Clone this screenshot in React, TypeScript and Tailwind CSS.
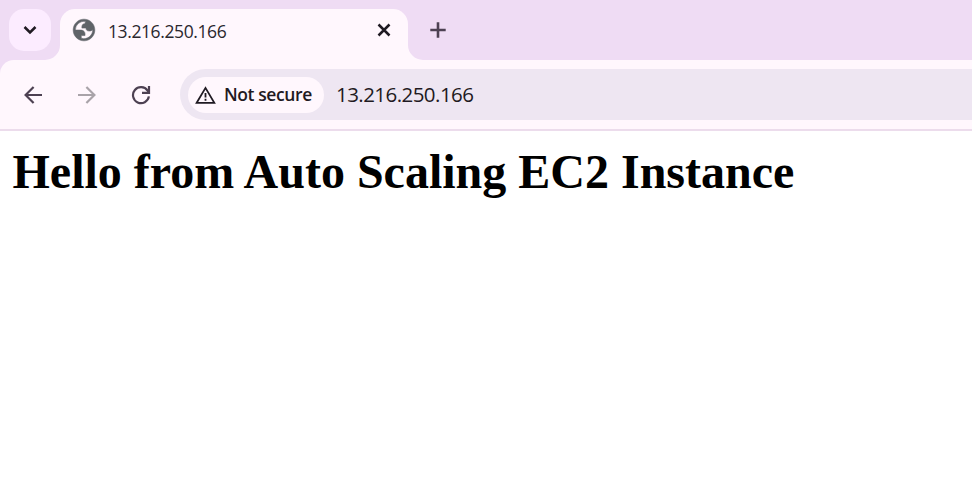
const UI_FONT = "font-['Open_Sans','Noto_Sans',sans-serif]";

function Globe() {
  return (
    <svg width="26" height="26" viewBox="0 0 24 24" className="-ml-px shrink-0" fill="#5f6368" stroke="#5f6368" strokeWidth="0.5">
      <path
        fillRule="evenodd"
        d="M12 2C6.48 2 2 6.48 2 12s4.48 10 10 10 10-4.48 10-10S17.52 2 12 2zM4 12h4.4c3.407.022 4.922 1.73 4.543 5.127H9.488v2.47a8.004 8.004 0 0 0 10.498-8.08C19.327 12.503 18.332 13 17 13c-2.137 0-3.206-.916-3.206-2.75h-3.748c-.274-2.728.683-4.092 2.87-4.092 0-.975.327-1.597.811-1.97A8.004 8.004 0 0 0 4 12z"
      />
    </svg>
  );
}

function Arrow({ className }: { className: string }) {
  return (
    <svg width="18" height="18" viewBox="0 0 18 18" fill="none" stroke="currentColor" strokeWidth="2.2" className={className}>
      <path d="M18 9H2M9.6 1 1.6 9l8 8" />
    </svg>
  );
}

function Reload() {
  return (
    <svg width="20" height="20" viewBox="0 0 20 20" fill="none" stroke="#4d4152" strokeWidth="2.2" className="ml-[35px]">
      <path d="M17.9 11.4A8 8 0 1 1 16.6 5.6L17.6 7" />
      <path d="M18 1v6.9h-7" />
    </svg>
  );
}

function TabStrip() {
  return (
    <div className="flex h-[60px] bg-[#efdcf4] pl-[9px] pt-[9px]">
      <button className="flex size-[42px] items-center justify-center rounded-[15px] bg-[#fcecff]">
        <svg width="14" height="10" viewBox="0 0 14 10" fill="none" stroke="#1f1a22" strokeWidth="2.5">
          <path d="M1.5 2 7 7.5 12.5 2" />
        </svg>
      </button>
      <div className="-ml-1.5 flex h-[51px] items-end">
        <svg width="15" height="15" viewBox="0 0 15 15" fill="#fff7fd">
          <path d="M15 0v15H0A15 15 0 0 0 15 0z" />
        </svg>
        <div className={`flex h-[51px] w-[348px] items-start rounded-t-[15px] bg-[#fff7fd] pl-3 pr-4 ${UI_FONT}`}>
          <div className="flex h-[42px] w-full items-center">
            <Globe />
            <span className="ml-[11px] pt-px text-[17.5px] leading-6 tracking-[-0.4px] text-[#2b272e]">13.216.250.166</span>
            <svg className="ml-auto" width="16" height="16" viewBox="0 0 16 16" fill="none" stroke="#1f1a22" strokeWidth="2.5">
              <path d="m2.5 2.5 11 11m0-11-11 11" />
            </svg>
          </div>
        </div>
        <svg width="15" height="15" viewBox="0 0 15 15" fill="#fff7fd">
          <path d="M0 0v15h15A15 15 0 0 1 0 0z" />
        </svg>
      </div>
      <svg className="ml-[7px] mt-[13px]" width="16" height="16" viewBox="0 0 16 16" fill="none" stroke="#4d4152" strokeWidth="2.6">
        <path d="M8 .3v15.4M.3 8h15.4" />
      </svg>
    </div>
  );
}

function Toolbar() {
  return (
    <div className="bg-[#efdcf4]">
      <div className="flex h-[71px] items-center rounded-tl-[14px] border-b-2 border-[#ecdcec] bg-[#fff7fd] pl-6">
        <Arrow className="mt-px text-[#4d4152]" />
        <Arrow className="ml-9 mt-px rotate-180 text-[#a9a3a9]" />
        <Reload />
        <div className={`ml-[29px] flex h-[51px] flex-1 items-center rounded-l-full bg-[#eee6f2] pl-2 ${UI_FONT}`}>
          <div className="flex h-9 w-[136px] items-center rounded-full bg-[#fff7fd] pl-2">
            <svg width="21" height="18" viewBox="0 0 21 18" fill="none" stroke="#1f1a22" strokeWidth="1.8" className="-ml-px">
              <path d="M1.7 16.8 10.5 1.9l8.8 14.9z" />
              <path d="M10.5 7v4.5M10.5 12.8v2" />
            </svg>
            <span className="ml-2 whitespace-nowrap pb-px text-[17.5px] font-semibold tracking-[-0.4px] text-[#1f1a22]">Not secure</span>
          </div>
          <span className="ml-3 pb-px text-[20.5px] tracking-[-0.55px] text-[#1f1a22]">13.216.250.166</span>
        </div>
      </div>
    </div>
  );
}

export default function App() {
  return (
    <div className="flex h-[499px] w-[972px] flex-col overflow-hidden bg-white">
      <TabStrip />
      <Toolbar />
      <main className="px-[12.5px] pt-[13px]">
        <h1 className="whitespace-nowrap font-['Liberation_Serif',serif] text-[48px] font-bold leading-[55px] text-black">
          Hello from Auto Scaling EC2 Instance
        </h1>
      </main>
    </div>
  );
}
